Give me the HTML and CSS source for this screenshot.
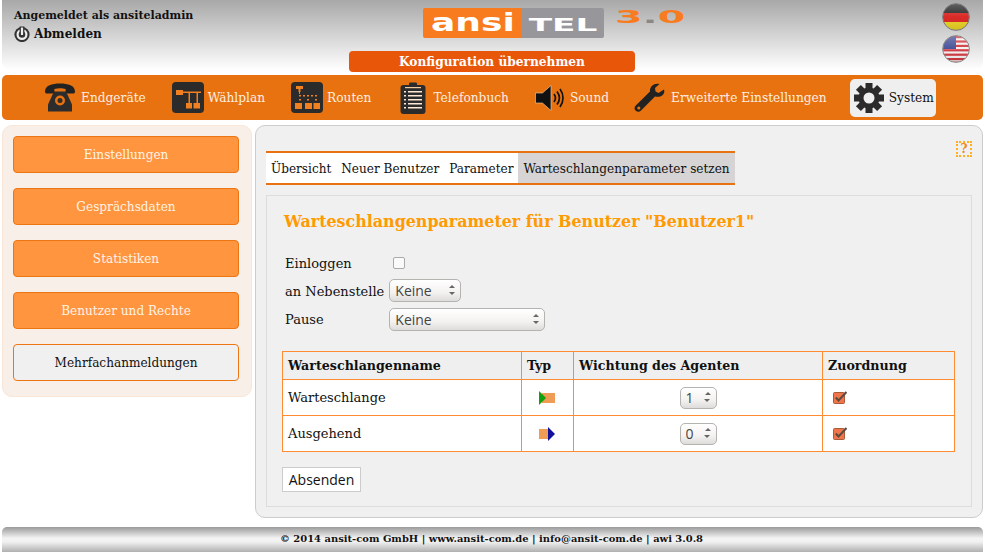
FILE: index.html
```html
<!DOCTYPE html>
<html lang="de">
<head>
<meta charset="utf-8">
<title>ansitel 3.0</title>
<link rel="stylesheet" href="styles.css">
</head>
<body>
<header class="top">
  <div class="user">
    <div class="user-name">Angemeldet als ansiteladmin</div>
    <a class="logout">
      <svg class="power" viewBox="0 0 16 16"><circle cx="8" cy="8.500" r="7.600" fill="#333"/><circle cx="8" cy="8.500" r="4.400" fill="none" stroke="#eee" stroke-width="2.200"/><rect x="5.600" y="0.500" width="4.800" height="6" fill="#333"/><rect x="6.900" y="1.500" width="2.200" height="7.500" rx="0.600" fill="#eee"/></svg>
      <span>Abmelden</span>
    </a>
  </div>
  <div class="brand">
    <div class="logo-row">
      <div class="logo"><span class="logo-a"><span class="logo-t">ansi</span></span><span class="logo-b"><span class="logo-t">TEL</span></span></div>
      <span class="version">3<span class="dot">.</span>0</span>
    </div>
    <button class="apply">Konfiguration übernehmen</button>
  </div>
  <div class="flags">
    <svg class="flag" viewBox="0 0 28 28">
      <defs>
        <clipPath id="fc"><circle cx="14" cy="14" r="13"/></clipPath>
        <linearGradient id="gl" x1="0" y1="0" x2="0" y2="1"><stop offset="0" stop-color="#fff" stop-opacity=".3"/><stop offset=".5" stop-color="#fff" stop-opacity=".05"/><stop offset="1" stop-color="#000" stop-opacity=".1"/></linearGradient>
      </defs>
      <g clip-path="url(#fc)"><rect width="28" height="10" fill="#222"/><rect y="10" width="28" height="9" fill="#d8201c"/><rect y="19" width="28" height="9" fill="#e6cf20"/><rect width="28" height="28" fill="url(#gl)"/></g>
      <circle cx="14" cy="14" r="13.400" fill="none" stroke="#777" stroke-width="1"/>
    </svg>
    <svg class="flag" viewBox="0 0 28 28">
      <g clip-path="url(#fc)"><rect width="28" height="28" fill="#f4f0f0"/>
        <g fill="#d0343c"><rect y="1" width="28" height="2.200"/><rect y="5.400" width="28" height="2.200"/><rect y="9.800" width="28" height="2.200"/><rect y="14.200" width="28" height="2.200"/><rect y="18.600" width="28" height="2.200"/><rect y="23" width="28" height="2.200"/><rect y="26.600" width="28" height="2"/></g>
        <rect width="14" height="14" fill="#3f4a94"/><rect width="28" height="28" fill="url(#gl)"/></g>
      <circle cx="14" cy="14" r="13.400" fill="none" stroke="#888" stroke-width="1"/>
    </svg>
  </div>
</header>

<nav class="nav">
  <a class="nav-item phone">
    <svg class="ico ico-phone" viewBox="0 0 32 30"><path d="M1 9C1 3 8 1 16 1s15 2 15 8c0 1-.5 2-1.500 2H23c-1 0-1.400-1-1.400-2V6.500c-3-1-8-1-11.200 0V9c0 1-.5 2-1.400 2H2.500C1.500 11 1 10 1 9z" fill="#222"/><path d="M10 9h12l6 13v7H4v-7z" fill="#2c2c2c"/><circle cx="16" cy="18" r="5" fill="#e8720f"/><circle cx="16" cy="18" r="2.500" fill="#2c2c2c"/></svg>
    <span>Endgeräte</span>
  </a>
  <a class="nav-item plan">
    <svg class="ico" viewBox="0 0 32 31"><rect width="32" height="31" rx="4" fill="#2b2b2b"/><g fill="#f08020"><rect x="4" y="8" width="7" height="5"/><rect x="11" y="9.500" width="18" height="1.500"/><rect x="16.500" y="11" width="1.500" height="10"/><rect x="24.500" y="11" width="1.500" height="10"/><rect x="14" y="21" width="6" height="5.500"/><rect x="21.500" y="21" width="6.500" height="5.500"/></g></svg>
    <span>Wählplan</span>
  </a>
  <a class="nav-item routes">
    <svg class="ico" viewBox="0 0 32 31"><rect width="32" height="31" rx="4" fill="#2b2b2b"/><g fill="#f08020"><rect x="5" y="4" width="7" height="3"/><rect x="7.500" y="7" width="2" height="3"/><rect x="8" y="10" width="1" height="2"/><rect x="8" y="13" width="2" height="1.500"/><rect x="12" y="13" width="2" height="1.500"/><rect x="16" y="13" width="2" height="1.500"/><rect x="20" y="13" width="2" height="1.500"/><rect x="24" y="13" width="2" height="1.500"/><rect x="8" y="17" width="2" height="1.500"/><rect x="16" y="17" width="2" height="1.500"/><rect x="24" y="17" width="2" height="1.500"/><rect x="4" y="21" width="7" height="6"/><rect x="14" y="21" width="7" height="6"/><rect x="22.500" y="21" width="6.500" height="6"/></g></svg>
    <span>Routen</span>
  </a>
  <a class="nav-item book">
    <svg class="ico ico-book" viewBox="0 0 26 32"><rect x="0.500" y="3" width="25" height="29" rx="3" fill="#2b2b2b"/><rect x="9" y="0.500" width="8" height="5" rx="1" fill="#2b2b2b"/><rect x="5" y="5" width="16" height="1.200" fill="#f5c9a0"/><g fill="#fde8d8"><rect x="4" y="9" width="2" height="1.500"/><rect x="4" y="13" width="2" height="1.500"/><rect x="4" y="17" width="2" height="1.500"/><rect x="4" y="21" width="2" height="1.500"/><rect x="4" y="25" width="2" height="1.500"/><rect x="8" y="9" width="14" height="1.500"/><rect x="8" y="13" width="14" height="1.500"/><rect x="8" y="17" width="14" height="1.500"/><rect x="8" y="21" width="14" height="1.500"/><rect x="8" y="25" width="14" height="1.500"/></g></svg>
    <span>Telefonbuch</span>
  </a>
  <a class="nav-item sound">
    <svg class="ico ico-sound" viewBox="0 0 30 26"><path d="M0.500 8h7L16 0.500v25L7.500 18h-7z" fill="#111" stroke="#f8d0b0" stroke-width=".6"/><g fill="none" stroke="#111" stroke-width="1.700"><path d="M19 9c1.800 2.500 1.800 5.500 0 8"/><path d="M22 6.500c3 4 3 9 0 13"/><path d="M25 4c4 5.500 4 12.500 0 18"/></g></svg>
    <span>Sound</span>
  </a>
  <a class="nav-item tools">
    <svg class="ico ico-tool" viewBox="0 0 31 30"><path d="M30 6.500 24.500 10 21.500 8.500l-.5-3.500L25.500 1C20.500-.5 15.500 3 16 8.500L1.800 22.500c-1.800 1.800-1.500 4 0 5.300s3.500 1.500 5.200-.2L21 13.500c6 1.500 10.500-2.500 9-7z" fill="#222"/><circle cx="4.800" cy="25" r="1.600" fill="#e8720f"/></svg>
    <span>Erweiterte Einstellungen</span>
  </a>
  <a class="nav-item active">
    <svg class="ico ico-gear" viewBox="0 0 30 30"><g fill="#2b2b2b"><circle cx="15" cy="15" r="10.500"/><rect x="11.500" y="0" width="7" height="30"/><rect x="0" y="11.500" width="30" height="7"/><rect x="11.500" y="0" width="7" height="30" transform="rotate(45 15 15)"/><rect x="0" y="11.500" width="30" height="7" transform="rotate(45 15 15)"/></g><circle cx="15" cy="15" r="5.500" fill="#efefef"/></svg>
    <span>System</span>
  </a>
</nav>

<div class="content">
  <aside class="side">
    <a class="side-btn">Einstellungen</a>
    <a class="side-btn">Gesprächsdaten</a>
    <a class="side-btn">Statistiken</a>
    <a class="side-btn">Benutzer und Rechte</a>
    <a class="side-btn current">Mehrfachanmeldungen</a>
  </aside>
  <main class="main">
    <span class="help">?</span>
    <div class="tabs">
      <a class="tab">Übersicht</a>
      <a class="tab">Neuer Benutzer</a>
      <a class="tab">Parameter</a>
      <a class="tab on">Warteschlangenparameter setzen</a>
    </div>
    <section class="panel">
      <h1 class="title">Warteschlangenparameter für Benutzer "Benutzer1"</h1>
      <div class="form">
        <label class="lbl">Einloggen</label>
        <span class="check-wrap"><input class="check" type="checkbox"></span>
        <label class="lbl">an Nebenstelle</label>
        <span class="sel sel-s"><select><option>Keine</option></select><i class="spin"></i></span>
        <label class="lbl">Pause</label>
        <span class="sel sel-l"><select><option>Keine</option></select><i class="spin"></i></span>
      </div>
      <table class="grid">
        <thead>
          <tr><th class="c1">Warteschlangenname</th><th class="c2">Typ</th><th class="c3">Wichtung des Agenten</th><th>Zuordnung</th></tr>
        </thead>
        <tbody>
          <tr>
            <td>Warteschlange</td>
            <td class="mid"><svg class="type" viewBox="0 0 16 14"><rect x="3" y="2" width="13" height="10" fill="#ef9c55"/><path d="M0 0l7 7-7 7z" fill="#10a010"/></svg></td>
            <td class="mid"><span class="num"><input type="text" value="1"><i class="spin"></i></span></td>
            <td><svg class="tick" viewBox="0 0 14 13"><rect x="0.500" y="1.500" width="11" height="11" rx="1" fill="#f0764a" stroke="#a85a3a"/><path d="M2.800 6.500l2.700 3L13.500 1" fill="none" stroke="#5f4a40" stroke-width="2"/></svg></td>
          </tr>
          <tr>
            <td>Ausgehend</td>
            <td class="mid"><svg class="type" viewBox="0 0 16 14"><rect x="0" y="2" width="10" height="10" fill="#ef9c55"/><path d="M9 0l7 7-7 7z" fill="#10109a"/></svg></td>
            <td class="mid"><span class="num"><input type="text" value="0"><i class="spin"></i></span></td>
            <td><svg class="tick" viewBox="0 0 14 13"><rect x="0.500" y="1.500" width="11" height="11" rx="1" fill="#f0764a" stroke="#a85a3a"/><path d="M2.800 6.500l2.700 3L13.500 1" fill="none" stroke="#5f4a40" stroke-width="2"/></svg></td>
          </tr>
        </tbody>
      </table>
      <button class="send">Absenden</button>
    </section>
  </main>
</div>

<footer class="foot">© 2014 ansit-com GmbH | www.ansit-com.de | info@ansit-com.de | awi 3.0.8</footer>
</body>
</html>
```

FILE: styles.css
```css
* { box-sizing: border-box; }
html, body { margin: 0; height: 552px; overflow: hidden; }
body {
  padding: 0 2px;
  background: #fff;
  font-family: "DejaVu Serif", serif;
  font-size: 13px;
  color: #111;
  display: flex;
  flex-direction: column;
}

.top {
  height: 70px;
  margin-bottom: 5px;
  display: grid;
  grid-template-columns: 347px 286px 1fr;
  background: linear-gradient(#a8a8a8, #fff);
  border-radius: 0 0 8px 8px;
}
.user { padding: 8px 0 0 12px; font-weight: bold; }
.user-name { font-size: 11px; line-height: 15px; }
.logout { display: flex; align-items: center; gap: 4px; font-size: 12.100px; margin-top: 2px; line-height: 18px; }
.power { width: 16px; height: 16px; }

.brand { display: flex; flex-direction: column; align-items: center; padding-top: 8px; }
.logo-row { position: relative; width: 286px; height: 30px; padding-left: 74px; margin-bottom: 13px; }
.logo { display: flex; width: 181px; height: 30px; border-radius: 2px; overflow: hidden; }
.logo-a, .logo-b { display: flex; align-items: center; justify-content: center; height: 30px; color: #fff; font-family: "DejaVu Sans", sans-serif; font-weight: bold; }
.logo-a { width: 99px; background: #f97b20; font-size: 24px; }
.logo-b { width: 82px; background: #97979b; font-size: 18px; }
.logo-t { display: inline-block; line-height: 30px; }
.logo-a .logo-t { transform: translateY(0) scale(1.5, 1); }
.logo-b .logo-t { transform: translateY(2px) scale(1.9, 1); }
.version { position: absolute; left: 266px; top: -1px; color: #f97b20; font: bold 18px/20px "DejaVu Sans", sans-serif; transform: scaleX(2.2); transform-origin: left center; }
.dot { color: #888; }
.apply {
  width: 286px; height: 21px; padding: 0; border: 0; border-radius: 4px;
  background: #e8560a; color: #fff;
  font: bold 12.200px "DejaVu Serif", serif;
}
.flags { display: flex; flex-direction: column; align-items: flex-end; gap: 4px; padding: 3px 13px 0 0; }
.flag { width: 28px; height: 28px; display: block; }

.nav {
  height: 45px;
  background: #e8720f;
  border-radius: 5px;
  display: flex;
  align-items: center;
  padding-left: 42px;
  color: #fdeee0;
  font-size: 12.200px;
}
.nav-item { display: flex; align-items: center; gap: 4px; height: 38px; }
.ico { width: 32px; height: 31px; display: block; }
.phone { gap: 5px; margin-right: 26px; }
.plan { margin-right: 26px; }
.routes { margin-right: 29px; }
.book { gap: 7px; margin-right: 26px; }
.sound { gap: 5px; margin-right: 25px; }
.tools { gap: 6px; margin-right: 23px; }
.ico-book { width: 26px; height: 32px; }
.ico-sound { width: 30px; height: 26px; }
.ico-tool { width: 31px; height: 30px; }
.ico-gear { width: 30px; height: 30px; }
.active { width: 86px; padding-left: 4px; gap: 5px; background: #efefef; border-radius: 5px; color: #111; }

.content { display: flex; gap: 3px; margin-top: 5px; height: 393px; align-items: flex-start; }
.side {
  width: 250px;
  height: 272px;
  padding: 10px 12px 0 10px;
  display: flex;
  flex-direction: column;
  gap: 15px;
  background: #f7efe8;
  border: 1px solid #f9e6d6;
  border-radius: 10px;
}
.side-btn {
  height: 37px;
  display: flex; align-items: center; justify-content: center;
  background: #ff953e;
  border: 1px solid #ee7612;
  border-radius: 4px;
  color: #fff3e6;
  font-size: 12.100px;
}
.side-btn.current { background: #f0f0f0; color: #111; }

.main {
  position: relative;
  flex: 1;
  height: 393px;
  padding: 25px 10px 10px 10px;
  background: #f0f0f0;
  border: 1px solid #ccc;
  border-radius: 10px;
}
.help {
  position: absolute; right: 10px; top: 15px;
  width: 16px; height: 16px;
  border: 2px dotted #ffb020;
  color: #ee8a20; font-size: 12px; line-height: 12px; text-align: center; font-weight: bold;
}
.tabs {
  display: inline-flex;
  height: 34px;
  border-top: 2px solid #e8720f;
  border-bottom: 2px solid #e8720f;
  background: #fff;
  vertical-align: top;
  font-size: 12.080px;
}
.tab { padding: 2px 5px 0; line-height: 28px; }
.tab.on { background: #d6d4d4; }
.panel {
  margin-top: 10px;
  height: 312px;
  border: 1px solid #ddd;
  padding: 0 15px;
}
.title { margin: 14px 0 18px 2px; font-size: 15.900px; line-height: 24px; font-weight: bold; color: #ff9a00; }
.form {
  display: grid;
  grid-template-columns: auto auto;
  justify-content: start;
  column-gap: 5px;
  row-gap: 5px;
  align-items: center;
  padding-left: 3px;
  margin-bottom: 20px;
}
.lbl { line-height: 18px; padding-top: 2px; }
.check-wrap { height: 22px; display: flex; align-items: center; }
.check { appearance: none; width: 12px; height: 12px; margin: 0 0 0 4px; background: #fafafa; border: 1px solid #aaa; border-radius: 2px; }
.sel, .num { position: relative; display: inline-block; }
.sel-s { width: 72px; height: 23px; }
.sel-l { width: 156px; height: 23px; margin-top: 1px; }
.sel select, .num input {
  appearance: none;
  width: 100%; height: 100%;
  padding: 0 0 0 5px;
  background: linear-gradient(#fff, #f4f2f0 60%, #dedcda);
  border: 1px solid #b5b3b0;
  border-radius: 5px;
  font: 14px "Open Sans", sans-serif;
  color: #444;
}
.spin {
  position: absolute; right: 6px; top: 50%; margin-top: -6px;
  width: 0; height: 0;
  border-left: 3.500px solid transparent; border-right: 3.500px solid transparent;
  border-bottom: 3px solid #666;
}
.spin::after {
  content: ""; position: absolute; left: -3.500px; top: 7px;
  width: 0; height: 0;
  border-left: 3.500px solid transparent; border-right: 3.500px solid transparent;
  border-top: 3px solid #666;
}
.grid { width: 673px; border-collapse: collapse; table-layout: fixed; }
.grid th, .grid td { border: 1px solid #ff8c33; padding: 0 5px; text-align: left; }
.grid th { height: 28px; background: #efefef; font-weight: bold; font-size: 12.650px; }
.grid td { height: 36px; background: #fff; }
.c1 { width: 239px; }
.c2 { width: 52px; }
.c3 { width: 249px; }
.grid td.mid { text-align: center; line-height: 0; }
.type { width: 16px; height: 14px; margin-left: -2px; }
.num { width: 37px; height: 22px; vertical-align: middle; }
.num .spin { right: 6px; }
.tick { width: 14px; height: 13px; margin-left: 5px; display: block; }
.send {
  display: block;
  margin-top: 15px;
  width: 79px; height: 25px; padding: 0;
  background: #fff; border: 1px solid #ccc;
  font: 14px "Open Sans", sans-serif; color: #111;
}
.foot {
  margin-top: 9px;
  padding-right: 2px;
  height: 25px;
  background: linear-gradient(#9a9a9a, #f4f4f4 45%, #f0f0f0 60%, #b0b0b0);
  border-radius: 5px 5px 0 0;
  text-align: center;
  font-size: 9.950px;
  font-weight: bold;
  line-height: 24px;
}
```
